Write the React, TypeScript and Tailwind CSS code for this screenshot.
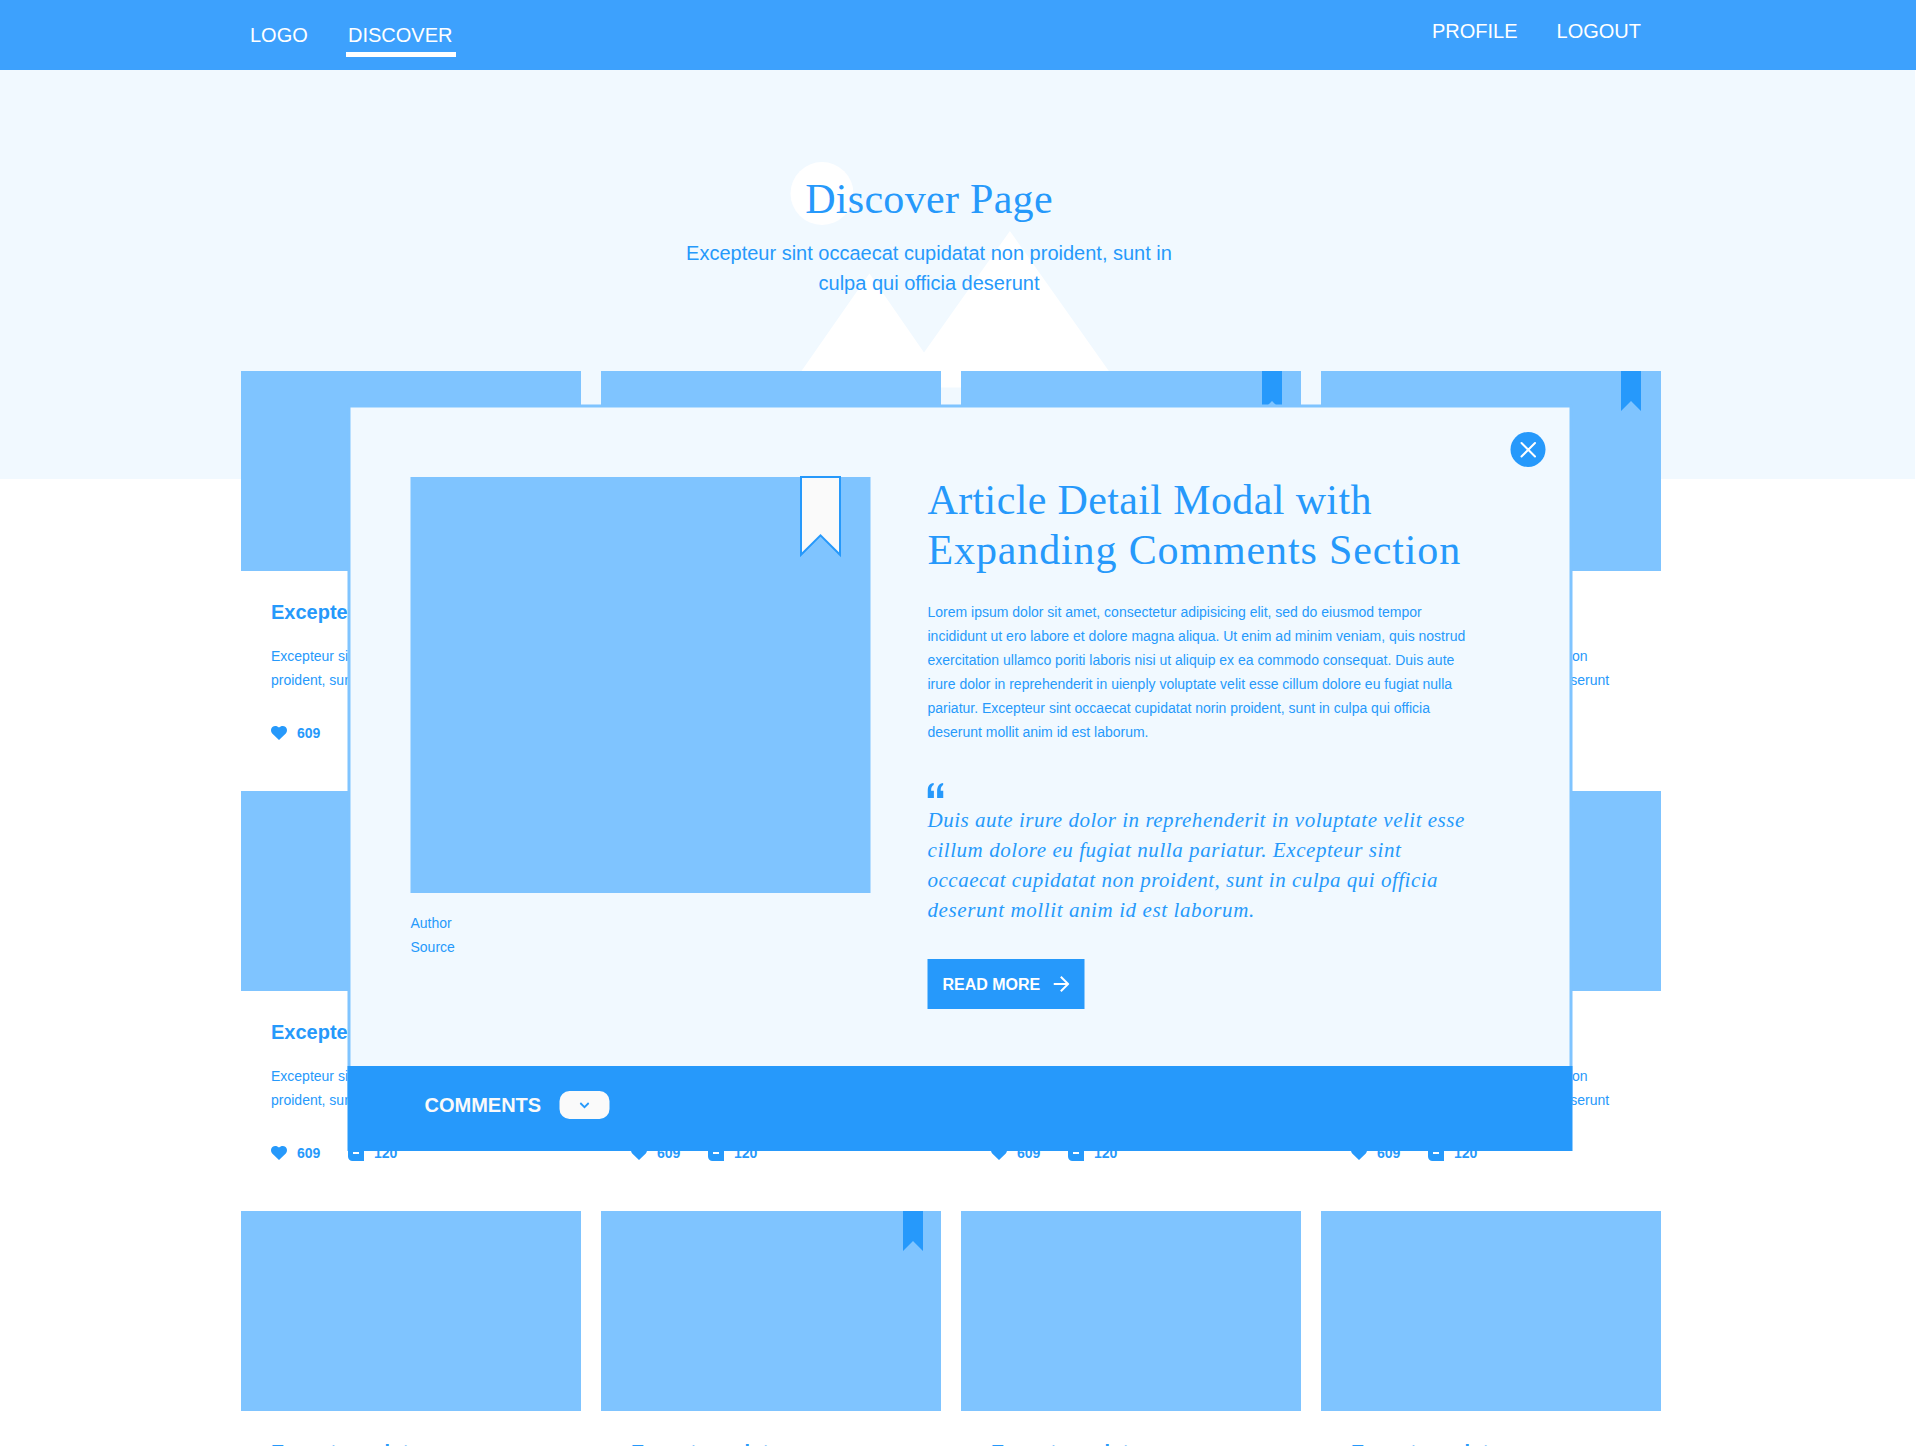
const SANS = "font-['Liberation_Sans',Arial,sans-serif]";
const SERIF = "font-[Georgia,'Liberation_Serif',serif]";

function HeartIcon() {
  return (
    <svg width="16" height="14" viewBox="0 0 16 14" fill="currentColor">
      <path d="M8 14 L1.2 7.4 C-0.5 5.6 -0.3 2.7 1.4 1.1 C3.3 -0.6 6.3 -0.2 8 1.6 C9.7 -0.2 12.7 -0.6 14.6 1.1 C16.3 2.7 16.5 5.6 14.8 7.4 Z" />
    </svg>
  );
}

function CommentIcon() {
  return (
    <svg width="16" height="16" viewBox="0 0 16 16">
      <path d="M4.5 0 H11.5 A4.5 4.5 0 0 1 16 4.5 V16 H4.5 A4.5 4.5 0 0 1 0 11.5 V4.5 A4.5 4.5 0 0 1 4.5 0 Z" fill="currentColor" />
      <path d="M5 4 H11 V6 H5 Z M5 7 H11 V9 H5 Z" fill="#fff" />
    </svg>
  );
}

function Bookmark() {
  return (
    <svg width="20" height="40" viewBox="0 0 20 40">
      <path d="M0 0 H20 V40 L10 30 L0 40 Z" fill="#2699fb" />
    </svg>
  );
}

type Mark = "none" | "a" | "b" | "c";
const markClass: Record<Mark, string> = {
  none: "hidden",
  a: "absolute top-0 right-[18px]",
  b: "absolute top-0 right-[19px]",
  c: "absolute top-0 right-5",
};
const cards: Mark[] = ["none", "none", "b", "c", "none", "none", "none", "none", "none", "a", "none", "none"];

function Card({ mark }: { mark: Mark }) {
  return (
    <article className="h-[420px]">
      <div className="relative h-[200px] bg-[#7fc4ff]">
        <div className={markClass[mark]}>
          <Bookmark />
        </div>
      </div>
      <div className="px-[30px] pt-[29px]">
        <h3 className="text-xl leading-6 font-bold">Excepteur sint</h3>
        <p className="mt-5 text-sm leading-6 whitespace-nowrap">
          Excepteur sint occaecat cupidatat non
          <br />
          proident, sunt in culpa qui officia deserunt
        </p>
        <div className="mt-[29px] flex h-6 items-center text-sm leading-6 font-bold">
          <HeartIcon />
          <span className="ml-[10px] w-[51px]">609</span>
          <CommentIcon />
          <span className="ml-[10px]">120</span>
        </div>
      </div>
    </article>
  );
}

function Modal() {
  return (
    <section className="absolute top-[404px] left-[347px] h-[747px] w-[1225px] translate-x-[0.5px]">
      <div className="absolute inset-x-0 top-0 flex h-[700px] translate-y-[0.5px] bg-[#7fc4ff] p-[3px]">
        <div className="flex-1 bg-[#f1f9ff]" />
      </div>
      <div className="relative flex h-[662px] pt-[73px] pl-[63px]">
        <div className="w-[460px]">
          <div className="relative h-[416px] bg-[#7fc4ff]">
            <svg className="absolute -top-[2px] left-[388px]" width="44" height="86" viewBox="0 0 44 86">
              <path d="M2.5 2 H41.5 V79.8 L22 60.3 L2.5 79.8 Z" fill="#fafafa" stroke="#2699fb" strokeWidth="2" strokeMiterlimit="10" />
            </svg>
          </div>
          <p className="mt-[18px] text-sm leading-6">
            Author
            <br />
            Source
          </p>
        </div>
        <div className="-mt-[2px] ml-[57px] whitespace-nowrap">
          <h2 className={`${SERIF} text-[42px] leading-[50px]`}>
            <span className="block tracking-[0.37px]">Article Detail Modal with</span>
            <span className="block tracking-[0.87px]">Expanding Comments Section</span>
          </h2>
          <p className="mt-[25px] text-sm leading-6">
            Lorem ipsum dolor sit amet, consectetur adipisicing elit, sed do eiusmod tempor
            <br />
            incididunt ut ero labore et dolore magna aliqua. Ut enim ad minim veniam, quis nostrud
            <br />
            exercitation ullamco poriti laboris nisi ut aliquip ex ea commodo consequat. Duis aute
            <br />
            irure dolor in reprehenderit in uienply voluptate velit esse cillum dolore eu fugiat nulla
            <br />
            pariatur. Excepteur sint occaecat cupidatat norin proident, sunt in culpa qui officia
            <br />
            deserunt mollit anim id est laborum.
          </p>
          <svg className="mt-[39px]" width="16" height="15" viewBox="0 0 16 15" fill="currentColor">
            <path d="M6.2 0 V1.9 C4.4 2.6 3.6 4.3 3.6 7.8 H6.4 V15 H0 V8.6 C0 3.4 2 0.6 6.2 0 Z" />
            <path d="M15.8 0 V1.9 C14 2.6 13.2 4.3 13.2 7.8 H16 V15 H9.6 V8.6 C9.6 3.4 11.6 0.6 15.8 0 Z" />
          </svg>
          <blockquote className={`${SERIF} mt-[7px] text-[21px] leading-[30px] italic`}>
            <span className="block tracking-[0.51px]">Duis aute irure dolor in reprehenderit in voluptate velit esse</span>
            <span className="block tracking-[0.56px]">cillum dolore eu fugiat nulla pariatur. Excepteur sint</span>
            <span className="block tracking-[0.5px]">occaecat cupidatat non proident, sunt in culpa qui officia</span>
            <span className="block tracking-[0.6px]">deserunt mollit anim id est laborum.</span>
          </blockquote>
          <button className="mt-[34px] flex h-[50px] w-[157px] items-center bg-[#2699fb] pl-[15px] text-base font-bold text-white">
            <span className="pt-0.5">READ MORE</span>
            <svg className="ml-[13px]" width="16" height="16" viewBox="0 0 16 16" fill="currentColor">
              <path d="M8 0 L6.6 1.4 L12.2 7 H0 V9 H12.2 L6.6 14.6 L8 16 L16 8 Z" />
            </svg>
          </button>
        </div>
      </div>
      <button className="absolute top-7 left-[1163px] size-[35px] rounded-full bg-[#2699fb]">
        <svg width="35" height="35" viewBox="0 0 35 35" fill="none" stroke="#fff" strokeWidth="2" strokeLinecap="round">
          <path d="M11 11 L24.5 24.5 M24.5 11 L11 24.5" />
        </svg>
      </button>
      <div className="relative flex h-[85px] items-start bg-[#2699fb] pl-[77px] text-[#fafafa]">
        <span className="mt-6 w-[135px] text-xl leading-[30px] font-bold">COMMENTS</span>
        <button className="mt-[25px] flex h-7 w-[50px] items-center justify-center rounded-[10px] bg-[#fafafa] text-[#2699fb]">
          <svg width="10" height="7" viewBox="0 0 10 7" fill="none" stroke="currentColor" strokeWidth="1.8">
            <path d="M0.8 1 L5 5.2 L9.2 1" />
          </svg>
        </button>
      </div>
    </section>
  );
}

export default function App() {
  return (
    <div className={`${SANS} relative h-[1446px] w-full overflow-hidden bg-white text-[#2699fb]`}>
      <nav className="flex h-[70px] w-[1916px] items-start justify-between bg-[#3da1fd] pr-[275px] pl-[250px] text-xl leading-[30px] text-white">
        <div className="flex pt-5">
          <span className="w-24">LOGO</span>
          <span className="h-[37px] w-[110px] border-b-[5px] border-white pl-0.5">DISCOVER</span>
        </div>
        <div className="flex gap-[39px] pt-4">
          <span>PROFILE</span>
          <span>LOGOUT</span>
        </div>
      </nav>
      <header className="relative h-[301px] w-[1915px]">
        <div className="absolute inset-x-0 top-0 h-[409px] bg-[#f1f9ff]" />
        <svg className="absolute top-[91px] left-[790px]" width="331" height="227" viewBox="790 161 331 227" fill="#fff">
          <circle cx="822" cy="193.5" r="31.5" />
          <path d="M790 387.5 L869.4 273.5 L924 352.6 L1009.9 231 L1120.5 387.5 Z" />
        </svg>
        <div className="relative ml-[629px] w-[600px] pt-[104px] text-center">
          <h1 className={`${SERIF} text-[42px] leading-[50px] tracking-[0.3px]`}>Discover Page</h1>
          <p className="mt-[14px] text-xl leading-[30px]">
            Excepteur sint occaecat cupidatat non proident, sunt in
            <br />
            culpa qui officia deserunt
          </p>
        </div>
      </header>
      <main className="relative ml-[241px] grid w-[1420px] grid-cols-4 gap-x-5">
        {cards.map((mark, i) => (
          <Card key={i} mark={mark} />
        ))}
      </main>
      <Modal />
    </div>
  );
}
